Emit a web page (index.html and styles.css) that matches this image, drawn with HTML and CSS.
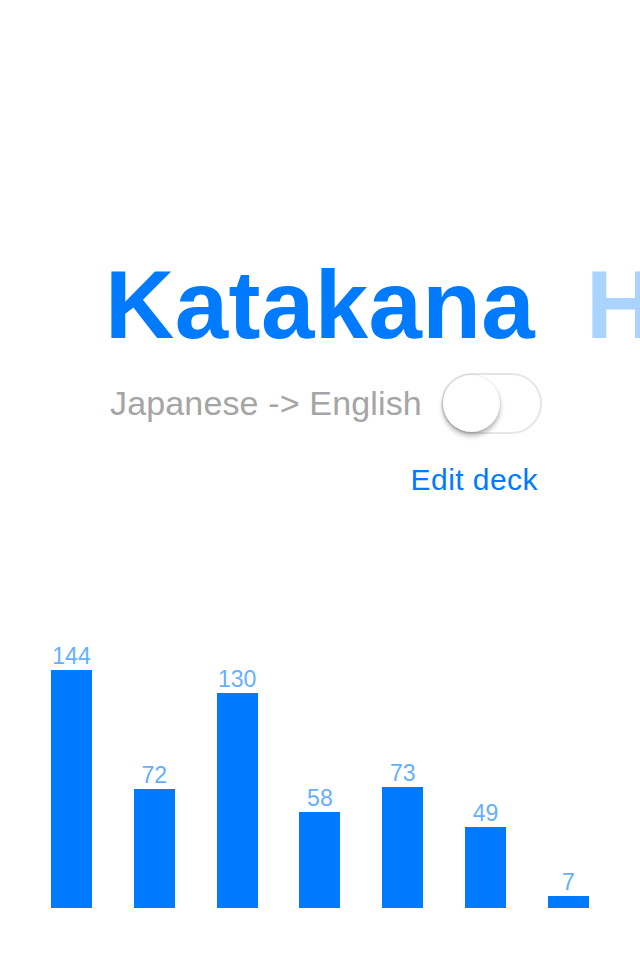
FILE: index.html
```html
<!DOCTYPE html>
<html lang="en">
<head>
<meta charset="utf-8">
<title>Decks</title>
<link rel="stylesheet" href="styles.css">
</head>
<body>
<main class="screen">
  <div class="pager">
    <h1 class="deck-title">Katakana</h1>
    <h1 class="deck-title deck-title--next">Hiragana</h1>
  </div>

  <div class="direction-row">
    <span class="direction-label">Japanese -&gt; English</span>
    <button class="switch" type="button" aria-pressed="false"><span class="switch-knob"></span></button>
  </div>

  <div class="edit-row">
    <a class="edit-link" href="#">Edit deck</a>
  </div>

  <div class="chart">
    <div class="chart-col"><span class="chart-label">144</span><div class="chart-bar" style="height:238px"></div></div>
    <div class="chart-col"><span class="chart-label">72</span><div class="chart-bar" style="height:119px"></div></div>
    <div class="chart-col"><span class="chart-label">130</span><div class="chart-bar" style="height:215px"></div></div>
    <div class="chart-col"><span class="chart-label">58</span><div class="chart-bar" style="height:96px"></div></div>
    <div class="chart-col"><span class="chart-label">73</span><div class="chart-bar" style="height:121px"></div></div>
    <div class="chart-col"><span class="chart-label">49</span><div class="chart-bar" style="height:81px"></div></div>
    <div class="chart-col"><span class="chart-label">7</span><div class="chart-bar" style="height:12px"></div></div>
  </div>
</main>
</body>
</html>
```

FILE: styles.css
```css
html, body {
  margin: 0;
  padding: 0;
  background: #ffffff;
}

body {
  font-family: "Liberation Sans", Arial, sans-serif;
  width: 640px;
  height: 960px;
  overflow: hidden;
}

.screen {
  display: flex;
  flex-direction: column;
  width: 640px;
  height: 960px;
  overflow: hidden;
}

.pager {
  display: flex;
  gap: 51px;
  margin-top: 257px;
  padding-left: 105px;
  white-space: nowrap;
  overflow: hidden;
}

.deck-title {
  margin: 0;
  font-size: 96px;
  line-height: 96px;
  height: 96px;
  font-weight: 700;
  letter-spacing: 0.4px;
  color: #007aff;
  flex: none;
}

.deck-title--next {
  color: #abd3ff;
}

.direction-row {
  display: flex;
  align-items: center;
  gap: 19px;
  margin-top: 19px;
  padding-left: 110px;
  height: 62px;
}

.direction-label {
  font-size: 34px;
  line-height: 40px;
  letter-spacing: 0.15px;
  color: #a5a5a5;
  white-space: nowrap;
}

.switch {
  position: relative;
  box-sizing: border-box;
  width: 101px;
  height: 61px;
  padding: 0;
  border: 2px solid #e6e6e6;
  border-radius: 31px;
  background: #ffffff;
  flex: none;
  cursor: pointer;
}

.switch-knob {
  position: absolute;
  left: 0;
  top: 0;
  width: 57px;
  height: 57px;
  border-radius: 50%;
  background: #ffffff;
  box-shadow: 0 0 0 1px rgba(0, 0, 0, 0.06), 0 4px 5px rgba(0, 0, 0, 0.28);
}

.edit-row {
  display: flex;
  justify-content: flex-end;
  margin-top: 28px;
  padding-right: 102px;
}

.edit-link {
  font-size: 30px;
  line-height: 36px;
  letter-spacing: 0.45px;
  color: #007aff;
  text-decoration: none;
}

.chart {
  display: flex;
  align-items: flex-end;
  gap: 41.8px;
  height: 288px;
  margin-top: 122px;
  padding-left: 51px;
}

.chart-col {
  display: flex;
  flex-direction: column;
  align-items: center;
  width: 41px;
}

.chart-label {
  font-size: 23px;
  line-height: 22px;
  color: #66afff;
  margin-bottom: 3px;
  white-space: nowrap;
}

.chart-bar {
  width: 41px;
  background: #007aff;
}
```
